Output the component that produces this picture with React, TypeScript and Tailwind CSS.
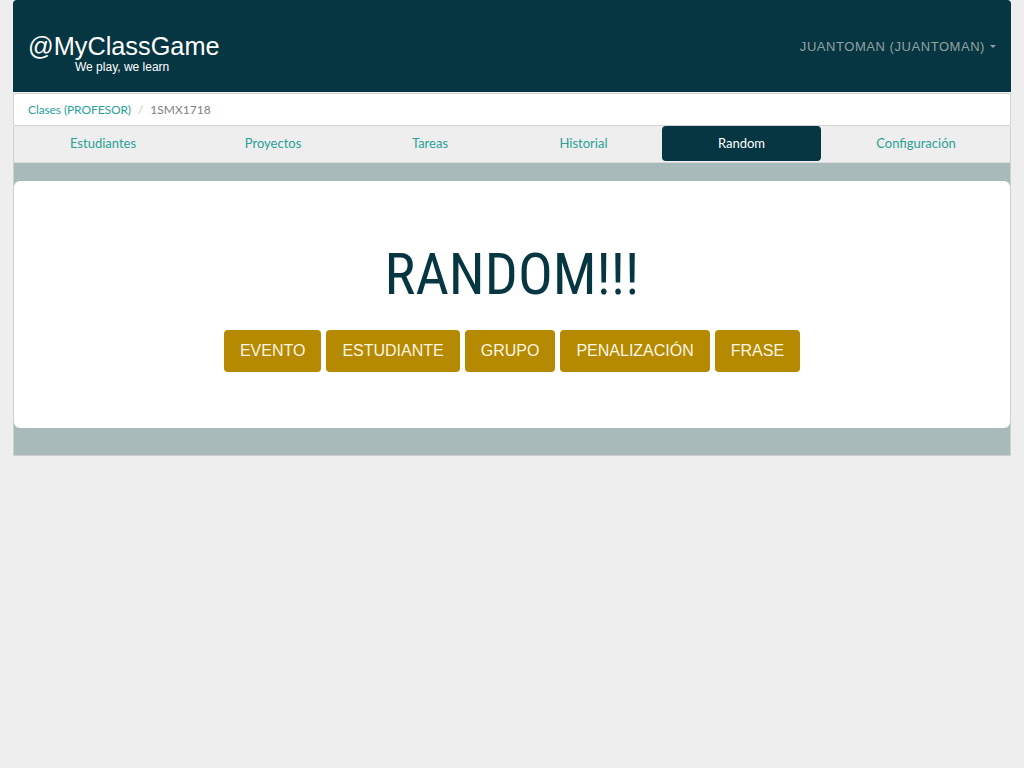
const tabs = [
  { label: "Estudiantes", w: "w-[178px]" },
  { label: "Proyectos", w: "w-[162px]" },
  { label: "Tareas", w: "w-[152px]" },
  { label: "Historial", w: "w-[155px]" },
  { label: "Random", w: "w-[159px]", active: true },
  { label: "Configuración", w: "flex-1" },
];

const actions = ["EVENTO", "ESTUDIANTE", "GRUPO", "PENALIZACIÓN", "FRASE"];

export default function App() {
  return (
    <div className="min-h-[768px] bg-[#eeeeee] font-['Liberation_Sans',Arial,sans-serif]">
      <div className="mx-[13px]">
        {/* Navbar */}
        <header className="h-[92px] bg-[#063642] rounded-t-[4px] flex items-start justify-between pl-[15px] pr-[15px]">
          <div className="pt-[31px]">
            <div className="text-[25.3px] leading-[30px] text-white">@MyClassGame</div>
            <div className="text-[12px] leading-[12px] text-white pl-[47px]">
              We play, we learn
            </div>
          </div>
          <div className="pt-[37px] flex items-center gap-[5px] text-[13px] tracking-[0.55px] text-[#93a1a1]">
            <span>JUANTOMAN (JUANTOMAN)</span>
            <span className="w-0 h-0 border-l-[3px] border-r-[3px] border-t-[3px] border-l-transparent border-r-transparent border-t-[#93a1a1]" />
          </div>
        </header>

        {/* Breadcrumb */}
        <nav className="h-[33px] mt-[1px] bg-white border border-[#d3d3d3] rounded-[2px] flex items-center px-[14px] text-[12px] font-['Lato',sans-serif]">
          <span className="text-[#2aa198] tracking-[-0.1px]">Clases (PROFESOR)</span>
          <span className="text-[#c4c4c4] px-[7px]">/</span>
          <span className="text-[#808080]">1SMX1718</span>
        </nav>

        {/* Tabs */}
        <div className="flex h-[37px] border-x border-[#cfcfcf] border-b border-b-[#dcdcdc] font-['Lato',sans-serif] text-[13px]">
          {tabs.map((t) => (
            <div
              key={t.label}
              className={`${t.w} flex items-center justify-center ${
                t.active
                  ? "bg-[#063642] text-white rounded-[4px] mx-[1px] mb-[1px]"
                  : "text-[#2aa198]"
              }`}
            >
              {t.label}
            </div>
          ))}
        </div>

        {/* Content */}
        <section className="bg-[#a9baba] border-x border-b border-[#cfcfcf] pt-[18px] pb-[27px]">
          <div className="bg-white rounded-[6px] pt-[63px] pb-[56px] flex flex-col items-center">
            <h1 className="text-[58px] leading-[60px] text-[#063642] font-['Liberation_Sans_Narrow','Roboto_Condensed',Roboto,sans-serif]">
              RANDOM!!!
            </h1>
            <div className="flex gap-[5px] mt-[26px]">
              {actions.map((a) => (
                <button
                  key={a}
                  className="h-[42px] px-[16px] bg-[#b58900] rounded-[4px] text-[16px] text-[#fdf6e3]"
                >
                  {a}
                </button>
              ))}
            </div>
          </div>
        </section>
      </div>
    </div>
  );
}
